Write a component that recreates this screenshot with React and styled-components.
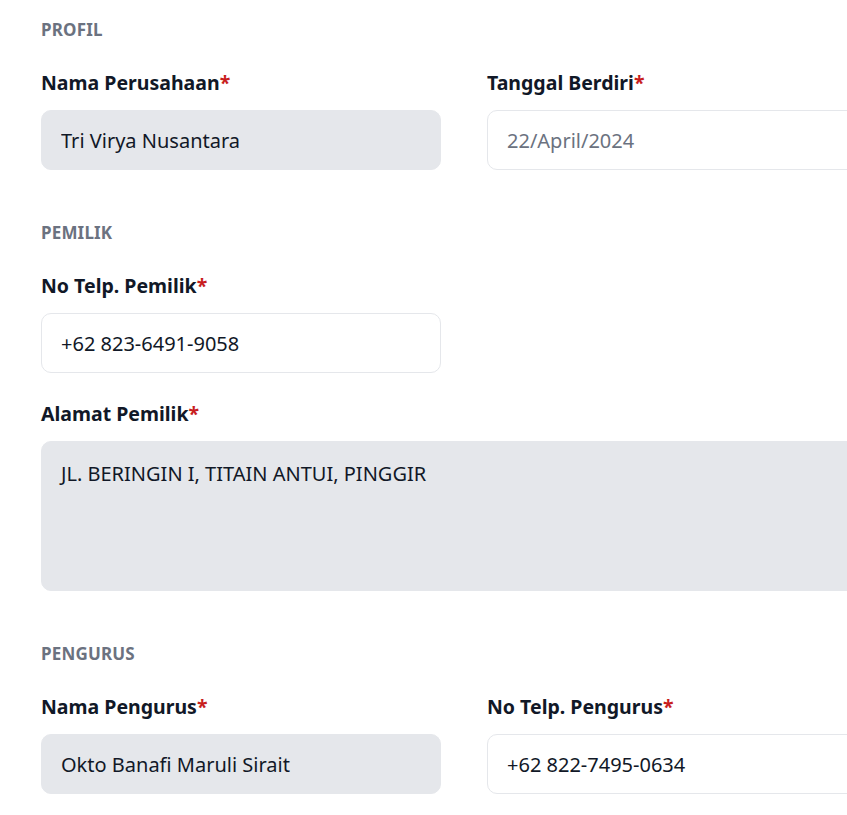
import React from 'react';
import styled, { createGlobalStyle } from 'styled-components';

const GlobalStyle = createGlobalStyle`
  html, body {
    margin: 0;
    padding: 0;
    background: #ffffff;
    overflow: hidden;
  }
  body {
    font-family: "Noto Sans", "Open Sans", sans-serif;
    color: #111827;
  }
  * {
    box-sizing: border-box;
  }
`;

const Page = styled.div`
  width: 960px;
  padding: 17px 0 0 41px;
`;

const Form = styled.form`
  width: 846px;
  display: flex;
  flex-direction: column;
`;

const Section = styled.section`
  display: flex;
  flex-direction: column;
  gap: 26px;
  margin-bottom: 50px;
`;

const SectionTitle = styled.h3`
  margin: 0;
  font-size: 17px;
  line-height: 25px;
  font-weight: 700;
  color: #6b7280;
  text-transform: uppercase;
  letter-spacing: 0.01em;
`;

const Row = styled.div`
  display: grid;
  grid-template-columns: 400px 400px;
  column-gap: 46px;
`;

const Field = styled.div`
  display: flex;
  flex-direction: column;
  gap: 12px;
  width: ${p => (p.$full ? '846px' : '400px')};
`;

const Label = styled.label`
  font-size: 19.5px;
  line-height: 30px;
  font-weight: 700;
  color: #111827;
`;

const Required = styled.span`
  color: #c81e1e;
`;

const Input = styled.input`
  width: 100%;
  height: 60px;
  padding: 0 19px;
  border-radius: 10px;
  border: 1px solid #e5e7eb;
  background: ${p => (p.$disabled ? '#e5e7eb' : '#ffffff')};
  color: ${p => (p.$muted ? '#6b7280' : '#111827')};
  font-family: inherit;
  font-size: 20px;
  outline: none;
`;

const TextArea = styled.textarea`
  width: 100%;
  height: 150px;
  padding: 17px 19px;
  border-radius: 10px;
  border: 1px solid #e5e7eb;
  background: #e5e7eb;
  color: #111827;
  font-family: inherit;
  font-size: 20px;
  line-height: 30px;
  resize: none;
  outline: none;
`;

function FormField({ label, children, full }) {
  return (
    <Field $full={full}>
      <Label>
        {label}
        <Required>*</Required>
      </Label>
      {children}
    </Field>
  );
}

export default function App() {
  return (
    <Page>
      <GlobalStyle />
      <Form>
        <Section>
          <SectionTitle>Profil</SectionTitle>
          <Row>
            <FormField label="Nama Perusahaan">
              <Input $disabled readOnly value="Tri Virya Nusantara" />
            </FormField>
            <FormField label="Tanggal Berdiri">
              <Input $muted readOnly value="22/April/2024" />
            </FormField>
          </Row>
        </Section>

        <Section>
          <SectionTitle>Pemilik</SectionTitle>
          <FormField label="No Telp. Pemilik">
            <Input readOnly value="+62 823-6491-9058" />
          </FormField>
          <FormField label="Alamat Pemilik" full>
            <TextArea readOnly value="JL. BERINGIN I, TITAIN ANTUI, PINGGIR" />
          </FormField>
        </Section>

        <Section>
          <SectionTitle>Pengurus</SectionTitle>
          <Row>
            <FormField label="Nama Pengurus">
              <Input $disabled readOnly value="Okto Banafi Maruli Sirait" />
            </FormField>
            <FormField label="No Telp. Pengurus">
              <Input readOnly value="+62 822-7495-0634" />
            </FormField>
          </Row>
        </Section>
      </Form>
    </Page>
  );
}
